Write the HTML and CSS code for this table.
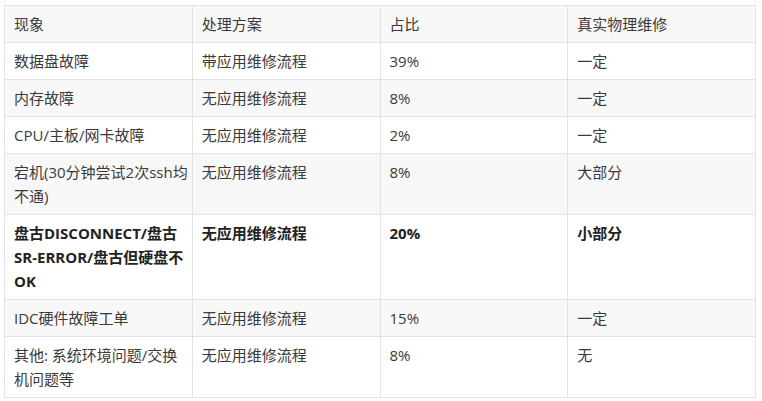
FILE: index.html
```html
<!DOCTYPE html>
<html lang="zh">
<head>
<meta charset="utf-8">
<link rel="stylesheet" href="styles.css">
</head>
<body>
<table class="data">
  <thead>
    <tr><th>现象</th><th>处理方案</th><th>占比</th><th>真实物理维修</th></tr>
  </thead>
  <tbody>
    <tr><td>数据盘故障</td><td>带应用维修流程</td><td>39%</td><td>一定</td></tr>
    <tr><td>内存故障</td><td>无应用维修流程</td><td>8%</td><td>一定</td></tr>
    <tr><td>CPU/主板/网卡故障</td><td>无应用维修流程</td><td>2%</td><td>一定</td></tr>
    <tr><td>宕机(30分钟尝试2次ssh均不通)</td><td>无应用维修流程</td><td>8%</td><td>大部分</td></tr>
    <tr class="strong"><td>盘古DISCONNECT/盘古SR-ERROR/盘古但硬盘不OK</td><td>无应用维修流程</td><td>20%</td><td>小部分</td></tr>
    <tr><td>IDC硬件故障工单</td><td>无应用维修流程</td><td>15%</td><td>一定</td></tr>
    <tr><td>其他: 系统环境问题/交换机问题等</td><td>无应用维修流程</td><td>8%</td><td>无</td></tr>
  </tbody>
</table>
</body>
</html>
```
FILE: styles.css
```css
html, body {
  margin: 0;
  padding: 0;
  background: #ffffff;
}
body {
  padding: 5px 4px;
  font-family: "Open Sans", "Noto Sans CJK SC", sans-serif;
  font-size: 15px;
  color: #3a3a3a;
}
.data {
  width: 752px;
  table-layout: fixed;
  border-collapse: collapse;
}
.data th,
.data td {
  border: 1px solid #e3e3e3;
  padding: 6px 3px 6px 9px;
  line-height: 24px;
  text-align: left;
  vertical-align: top;
  font-weight: normal;
  line-break: strict;
}
.data thead tr {
  background: #f8f8f8;
}
.data tbody tr:nth-child(even) {
  background: #f8f8f8;
}
.data .strong td {
  font-weight: bold;
  color: #222;
}
```
